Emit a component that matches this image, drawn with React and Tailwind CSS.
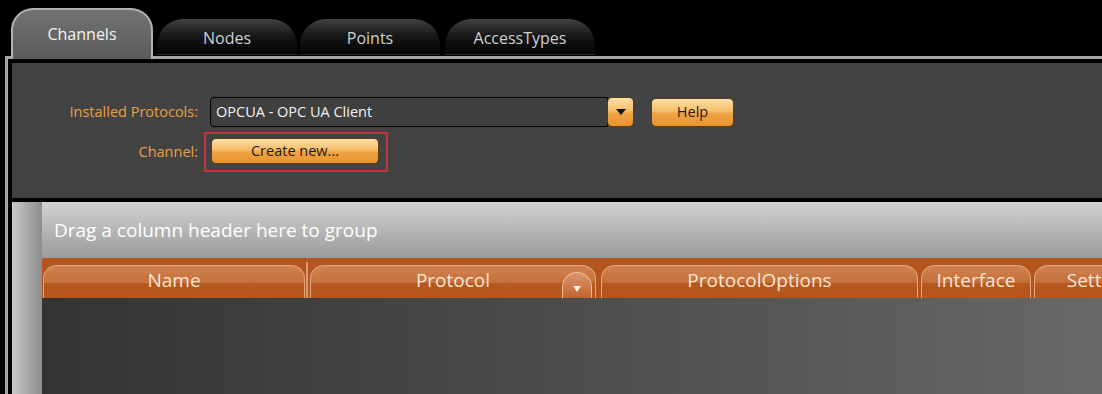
import React from 'react';

const font = { fontFamily: '"Open Sans", "Noto Sans", "Liberation Sans", sans-serif' };

const orangeBtn =
  'bg-[linear-gradient(to_bottom,#fde0a8_0%,#f6bd68_45%,#eea243_55%,#e8952f_100%)] border border-[#5e3d14] text-[#1c1c1c]';

const headCell =
  'relative shrink-0 h-[33px] rounded-t-[14px] border-x border-t border-[#e6a47a] bg-[linear-gradient(to_bottom,#d0834f_0%,#c4703c_52%,#b6581f_53%,#b4561e_100%)] flex items-center justify-center pb-[4px] text-[19px] text-[#f8e6d2] whitespace-nowrap';

const Tab = ({ label, className }) => (
  <div
    className={`h-[36px] mb-[1px] rounded-t-[26px] bg-linear-to-b from-[#434343] via-[#161616] to-[#050505] border-b border-[#2a2a2a] flex justify-center pt-[7px] text-[16px] text-[#cfcfcf] ${className}`}
  >
    {label}
  </div>
);

export default function App() {
  return (
    <div className="w-[1102px] h-[394px] bg-black overflow-hidden flex flex-col" style={font}>
      {/* tab strip */}
      <div className="h-[56px] flex items-end pl-[11px] relative z-10 shrink-0">
        <div className="w-[142px] h-[51px] -mb-[3px] rounded-t-[22px] border-2 border-b-0 border-[#b2b2b2] bg-linear-to-b from-[#727272] to-[#5b5b5b] flex justify-center pt-[12px] text-[16px] text-[#f4f4f4]">
          Channels
        </div>
        <Tab label="Nodes" className="ml-[4px] w-[140px]" />
        <Tab label="Points" className="ml-[3px] w-[140px]" />
        <Tab label="AccessTypes" className="ml-[5px] w-[150px]" />
      </div>

      {/* frame */}
      <div className="flex-1 ml-[5px] border-l-[3px] border-t-[3px] border-[#a6a6a6] pl-[4px] pt-[4px] flex flex-col min-h-0">
        {/* settings panel */}
        <div className="h-[135px] shrink-0 bg-[#434343] pt-[34px] flex flex-col">
          <div className="flex items-center h-[30px]">
            <div className="w-[186px] text-right text-[14.5px] text-[#eba043]">Installed Protocols:</div>
            <div className="ml-[12px] w-[424px] h-[30px] flex">
              <div className="flex-1 h-[30px] border border-black rounded-l-[4px] bg-[#3f3f3f] flex items-center pl-[5px] text-[14.5px] text-[#f2f2f2]">
                OPCUA - OPC UA Client
              </div>
              <div className={`w-[27px] h-[30px] -ml-[1px] rounded-[5px] flex items-center justify-center ${orangeBtn}`}>
                <svg width="10" height="6" viewBox="0 0 10 6">
                  <path d="M0 0h10L5 6z" fill="#111" />
                </svg>
              </div>
            </div>
            <div className={`ml-[17px] w-[83px] h-[29px] rounded-[5px] flex items-center justify-center text-[14.5px] ${orangeBtn}`}>
              Help
            </div>
          </div>

          <div className="flex items-center mt-[5px]">
            <div className="w-[186px] text-right text-[14.5px] text-[#eba043]">Channel:</div>
            <div className="ml-[6px] border-2 border-[#c9333e] pt-[4px] pb-[6px] pl-[5px] pr-[7px]">
              <div className={`w-[168px] h-[26px] rounded-[5px] flex items-center justify-center text-[14.5px] ${orangeBtn}`}>
                Create new...
              </div>
            </div>
          </div>
        </div>

        {/* grid */}
        <div className="flex-1 mt-[4px] flex min-h-0">
          <div className="w-[30px] shrink-0 bg-linear-to-r from-[#c8c8c8] to-[#8e8e8e]" />
          <div className="flex-1 flex flex-col min-w-0">
            <div className="h-[56px] shrink-0 bg-linear-to-b from-[#d2d2d2] to-[#9b9b9b] flex items-center pl-[12px] text-[19px] text-white">
              Drag a column header here to group
            </div>
            <div className="h-[40px] shrink-0 bg-[#b4541e] flex items-end overflow-hidden">
              <div className={`${headCell} ml-[1px] w-[262px]`}>Name</div>
              <div className="shrink-0 ml-[1px] w-[2px] h-[36px] bg-[#dc9a70]" />
              <div className={`${headCell} ml-[2px] w-[286px]`}>
                Protocol
                <div className="absolute right-[3px] bottom-0 w-[30px] h-[26px] rounded-t-[15px] border-x border-t border-[#f1bc98] bg-linear-to-b from-[#dc966a] to-[#c0642f] flex items-center justify-center pt-[6px]">
                  <svg width="8" height="6" viewBox="0 0 8 6">
                    <path d="M0 0h8L4 6z" fill="#fbeee4" />
                  </svg>
                </div>
              </div>
              <div className={`${headCell} ml-[5px] w-[317px]`}>ProtocolOptions</div>
              <div className={`${headCell} ml-[3px] w-[110px]`}>Interface</div>
              <div className={`${headCell} ml-[3px] w-[136px]`}>Settings</div>
            </div>
            <div className="flex-1 bg-linear-to-r from-[#333333] to-[#686868]" />
          </div>
        </div>
      </div>
    </div>
  );
}
